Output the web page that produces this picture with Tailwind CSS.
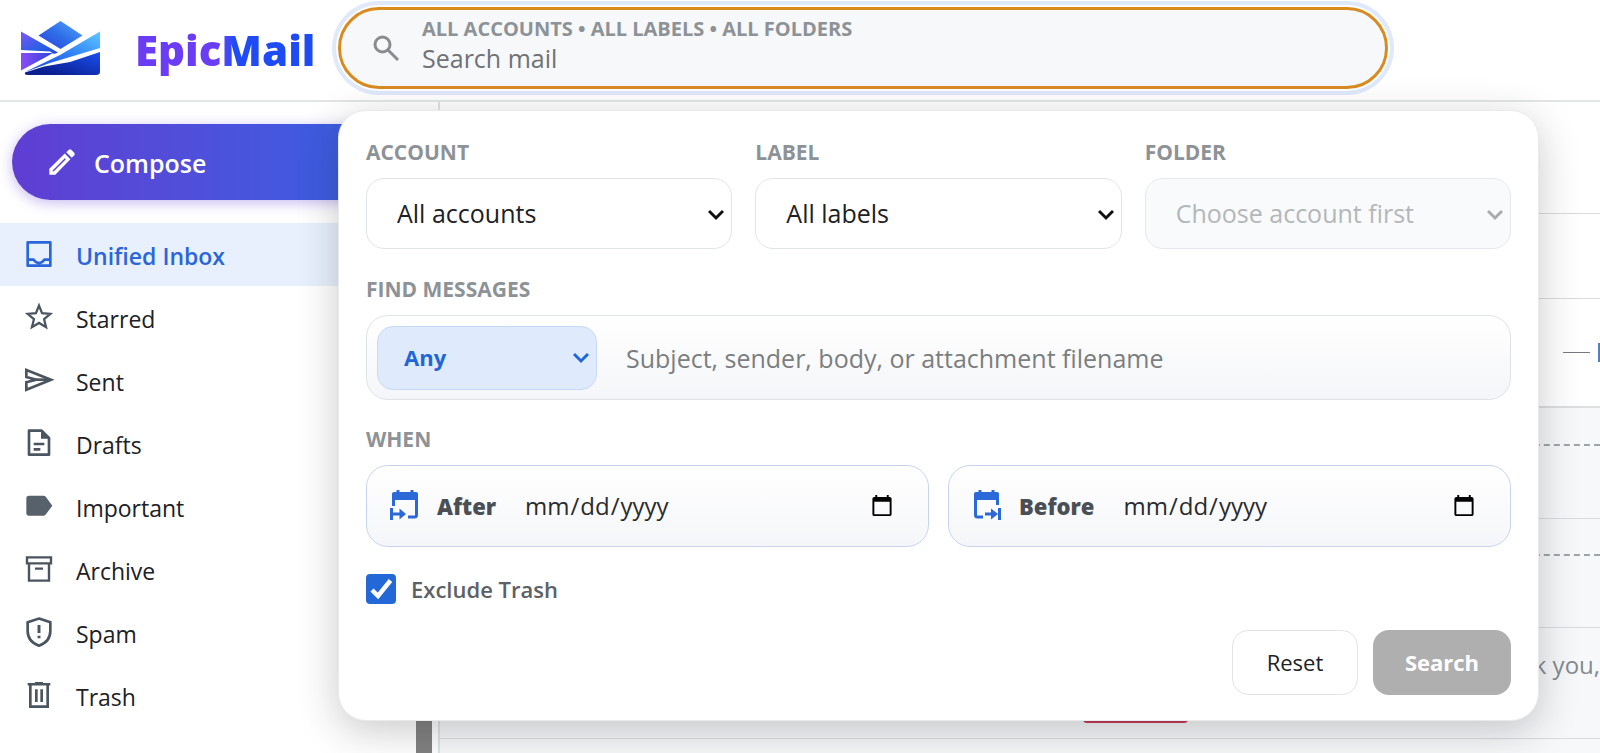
<!DOCTYPE html>
<html lang="en">
<head>
<meta charset="utf-8">
<meta name="viewport" content="width=device-width, initial-scale=1">
<title>EpicMail</title>
<script src="https://cdn.jsdelivr.net/npm/@tailwindcss/browser@4"></script>
</head>
<body class="relative flex h-screen flex-col overflow-hidden bg-white font-['Open_Sans','Noto_Sans',sans-serif] text-[23px] text-[#202124]">

<header class="relative flex h-[102px] shrink-0 items-start border-b-2 border-[#e3e6e7] bg-white">
  <a href="#" class="flex h-full w-[338px] shrink-0 items-center gap-[35px] pl-[20px]">
    <svg class="h-[58px] w-[80px] shrink-0" viewBox="0 0 80 58" aria-hidden="true">
      <defs>
        <linearGradient id="gt" x1="0" y1="1" x2="1" y2="0"><stop offset="0" stop-color="#2a3fdc"/><stop offset="0.5" stop-color="#2f6fe8"/><stop offset="1" stop-color="#55a8ff"/></linearGradient>
        <linearGradient id="gl" x1="0" y1="0" x2="1" y2="1"><stop offset="0" stop-color="#7d55f5"/><stop offset="0.6" stop-color="#2b5fe6"/><stop offset="1" stop-color="#1f49dc"/></linearGradient>
        <linearGradient id="gm" x1="0" y1="0" x2="1" y2="0"><stop offset="0" stop-color="#8a4df5"/><stop offset="1" stop-color="#2b45dc"/></linearGradient>
        <linearGradient id="gr" x1="0" y1="1" x2="1" y2="0"><stop offset="0" stop-color="#1746d8"/><stop offset="0.5" stop-color="#2e7cf6"/><stop offset="1" stop-color="#5cc8ff"/></linearGradient>
        <linearGradient id="gb" x1="0" y1="1" x2="1" y2="0"><stop offset="0.200" stop-color="#0b1f90"/><stop offset="1" stop-color="#1b50f0"/></linearGradient>
      </defs>
      <path d="M40.500 0L62.500 14.500L40.500 28L18.500 14.500Z" fill="url(#gt)"/>
      <path d="M1 10.500L38 31.500L34 33L30 30.500L1 29Z" fill="url(#gl)"/>
      <path d="M1 32H33L25 36.500L1 49.500Z" fill="url(#gm)"/>
      <path d="M80 10.500V27L30 42L5 51L40 34Z" fill="url(#gr)"/>
      <path d="M80 31V51Q80 54 76 54H8Q4 54 5 51.500L24 45.500L50 41Z" fill="url(#gb)"/>
    </svg>
    <span class="bg-linear-to-r from-[#6a3df5] from-45% to-[#1f4bf5] to-55% bg-clip-text text-[42px] leading-[58px] font-extrabold text-transparent">EpicMail</span>
  </a>
  <div class="mt-[7px] flex h-[82px] w-[1050px] items-center gap-[22px] rounded-full bg-[#f6f8fa] pl-[34px] shadow-[0_0_0_2px_#fff,0_0_0_6px_#dfe9fb] outline-3 -outline-offset-3 outline-[#d98b1f]">
    <svg class="size-[28px] shrink-0" viewBox="0 0 28 28" fill="none" stroke="#8a8d90" stroke-width="3" aria-hidden="true"><circle cx="10.500" cy="10.500" r="7.500"/><path d="M16 16L26 26"/></svg>
    <label class="flex flex-1 flex-col pb-[6px]">
      <span class="text-[20px] leading-[26px] font-bold text-[#8d9297]">ALL ACCOUNTS • ALL LABELS • ALL FOLDERS</span>
      <input type="text" placeholder="Search mail" class="h-[32px] w-full bg-transparent text-[25px] leading-[32px] outline-none placeholder:text-[#6f7275]">
    </label>
  </div>
</header>

<div class="flex min-h-0 flex-1">
  <nav class="flex w-[440px] shrink-0 flex-col overflow-hidden border-r-2 border-[#e0e3e4] pt-[22px]">
    <button class="mb-[23px] ml-[12px] flex h-[76px] w-[392px] shrink-0 items-center gap-[16px] rounded-full bg-linear-to-r from-[#5f3dd3] to-[#2f62e3] pl-[34px] text-[25px] font-semibold text-white shadow-[0_3px_14px_rgba(95,61,211,0.35)]">
      <svg class="size-[32px]" viewBox="0 0 24 24" fill="#fff" aria-hidden="true"><path fill-rule="evenodd" d="M2.500 17L14.100 5.700L18.300 9.900L7 21.500H2.500ZM5 18.300V19H5.900L14.900 9.900L14.100 9.100Z"/><path d="M15.200 4.700L17.100 2.800Q18 2.100 18.900 2.800L21.200 5.100Q21.900 6 21.200 6.900L19.300 8.800Z"/></svg>
      <span class="pt-[3px]">Compose</span>
    </button>
    <a href="#" class="flex h-[63px] shrink-0 items-center gap-[21px] bg-[#e8f0fd] pl-[23px] font-semibold text-[#2a66d9]">
      <svg class="size-[32px]" viewBox="0 0 24 24" fill="none" stroke="currentColor" stroke-width="2" stroke-linejoin="round" aria-hidden="true"><path d="M3.500 2.500H20.500V20H3.500ZM3.500 15.500H8Q9.500 18 12 18T16 15.500H20.500"/></svg><span class="pt-[3px]">Unified Inbox</span></a>
    <a href="#" class="flex h-[63px] shrink-0 items-center gap-[21px] pl-[23px]">
      <svg class="size-[32px]" viewBox="0 0 24 24" fill="none" stroke="#4a5560" stroke-width="1.700" aria-hidden="true"><path d="M12 2.700L14.300 8.400L20.500 8.900L15.800 12.900L17.300 18.900L12 15.700L6.700 18.900L8.200 12.900L3.500 8.900L9.700 8.400Z"/></svg><span class="pt-[3px]">Starred</span></a>
    <a href="#" class="flex h-[63px] shrink-0 items-center gap-[21px] pl-[23px]">
      <svg class="size-[32px]" viewBox="0 0 24 24" fill="none" stroke="#4a5560" stroke-width="2" aria-hidden="true"><path d="M2.500 3.800L21 11L2.500 18.500V13L10 11L2.500 9Z"/><path d="M10 11H21"/></svg><span class="pt-[3px]">Sent</span></a>
    <a href="#" class="flex h-[63px] shrink-0 items-center gap-[21px] pl-[23px]">
      <svg class="size-[32px]" viewBox="0 0 24 24" fill="none" stroke="#4a5560" stroke-width="2" aria-hidden="true"><path d="M4.500 2H14L19.500 7.500V20H4.500Z" stroke-linejoin="round"/><path d="M13.500 2V8H19.500Z" fill="#4a5560" stroke="none"/><path d="M8 12H16M8 16H13"/></svg><span class="pt-[3px]">Drafts</span></a>
    <a href="#" class="flex h-[63px] shrink-0 items-center gap-[21px] pl-[23px]">
      <svg class="size-[32px]" viewBox="0 0 24 24" fill="#57616b" aria-hidden="true"><path d="M4.500 3.500H15.500Q16.500 3.500 17.200 4.500L22 11L17.200 17.500Q16.500 18.500 15.500 18.500H4.500Q2.500 18.500 2.500 16.500V5.500Q2.500 3.500 4.500 3.500Z"/></svg><span class="pt-[3px]">Important</span></a>
    <a href="#" class="flex h-[63px] shrink-0 items-center gap-[21px] pl-[23px]">
      <svg class="size-[32px]" viewBox="0 0 24 24" fill="none" stroke="#4a5560" stroke-width="1.800" aria-hidden="true"><path d="M3 2.500H21V7H3ZM4.500 7V20H19.500V7M9 11H15"/></svg><span class="pt-[3px]">Archive</span></a>
    <a href="#" class="flex h-[63px] shrink-0 items-center gap-[21px] pl-[23px]">
      <svg class="size-[32px]" viewBox="0 0 24 24" fill="none" stroke="#4a5560" stroke-width="2" aria-hidden="true"><path d="M12 1.200L20.500 4V10.500Q20.500 18.500 12 21.500Q3.500 18.500 3.500 10.500V4Z"/><path d="M12 6V12M12 14V16" stroke-width="2.200"/></svg><span class="pt-[3px]">Spam</span></a>
    <a href="#" class="flex h-[63px] shrink-0 items-center gap-[21px] pl-[23px]">
      <svg class="size-[32px]" viewBox="0 0 24 24" fill="none" stroke="#4a5560" stroke-width="2" aria-hidden="true"><path d="M3.500 3.200H20.500M9 2.500H15M5.500 3.500V20H18.500V3.500M10 7V16.500M14 7V16.500"/></svg><span class="pt-[3px]">Trash</span></a>
  </nav>
  <main class="flex min-w-0 flex-1 flex-col overflow-hidden bg-[#f6f8fa] text-[#858a90]">
    <div class="h-[112px] shrink-0 border-b border-[#d9dcde] bg-white"></div>
    <div class="h-[85px] shrink-0 border-b border-[#d9dcde] bg-white"></div>
    <div class="flex h-[109px] shrink-0 items-center justify-end gap-[8px] border-b-2 border-[#dcdee0] bg-white"><span class="h-px w-[27px] bg-[#777b80]"></span><span class="h-[19px] w-[2px] bg-[#4e7fc4]"></span></div>
    <div class="h-[111px] shrink-0 border-b border-[#d9dcde] pt-[36px]"><div class="border-t-2 border-dashed border-[#a0a5a9]"></div></div>
    <div class="h-[109px] shrink-0 border-b border-[#d9dcde] pt-[35px]"><div class="border-t-2 border-dashed border-[#a0a5a9]"></div></div>
    <div class="relative flex h-[111px] shrink-0 items-start justify-end border-b border-[#d9dcde] pt-[20px] text-[24px]"><span class="leading-[34px]">Thank you,</span><span class="absolute bottom-[15px] left-[643px] h-[30px] w-[105px] rounded-sm bg-[#c43a55]"></span></div>
    <div class="h-[80px] shrink-0"></div>
  </main>
</div>

<!-- sidebar scrollbar thumb -->
<div class="absolute top-[670px] left-[416px] h-[83px] w-[16px] bg-[#818181]"></div>

<form class="absolute top-[110px] right-[61px] left-[338px] flex flex-col rounded-[28px] border border-[#e8eaec] bg-white px-[27px] pt-[27px] pb-[25px] shadow-[0_10px_40px_rgba(32,33,36,0.24)]">
  <div class="grid grid-cols-3 gap-[23px]">
    <label class="flex flex-col gap-[12px]">
      <span class="text-[21px] leading-[28px] font-bold text-[#8d9297]">ACCOUNT</span>
      <span class="relative block"><select class="h-[71px] w-full appearance-none rounded-[18px] border border-[#e2e5e7] bg-white pl-[30px] text-[25px]"><option>All accounts</option></select>
      <svg class="pointer-events-none absolute top-[31px] right-[8px] h-[12px] w-[16px]" viewBox="0 0 16 12" fill="none" stroke="#111" stroke-width="3" aria-hidden="true"><path d="M1 2L8 9L15 2"/></svg></span>
    </label>
    <label class="flex flex-col gap-[12px]">
      <span class="text-[21px] leading-[28px] font-bold text-[#8d9297]">LABEL</span>
      <span class="relative block"><select class="h-[71px] w-full appearance-none rounded-[18px] border border-[#e2e5e7] bg-white pl-[30px] text-[25px]"><option>All labels</option></select>
      <svg class="pointer-events-none absolute top-[31px] right-[8px] h-[12px] w-[16px]" viewBox="0 0 16 12" fill="none" stroke="#111" stroke-width="3" aria-hidden="true"><path d="M1 2L8 9L15 2"/></svg></span>
    </label>
    <label class="flex flex-col gap-[12px]">
      <span class="text-[21px] leading-[28px] font-bold text-[#8d9297]">FOLDER</span>
      <span class="relative block"><select disabled class="h-[71px] w-full appearance-none rounded-[18px] border border-[#e6e9eb] bg-[#f8fafb] pl-[30px] text-[25px] text-[#b4b7b9] opacity-100"><option>Choose account first</option></select>
      <svg class="pointer-events-none absolute top-[31px] right-[8px] h-[12px] w-[16px]" viewBox="0 0 16 12" fill="none" stroke="#a9acae" stroke-width="3" aria-hidden="true"><path d="M1 2L8 9L15 2"/></svg></span>
    </label>
  </div>
  <h2 class="mt-[26px] text-[21px] leading-[28px] font-bold text-[#8d9297]">FIND MESSAGES</h2>
  <div class="mt-[12px] flex h-[85px] items-center gap-[29px] rounded-[22px] border border-[#e0e3e5] bg-linear-to-b from-white to-[#f5f6f9] pl-[10px]">
    <span class="relative block w-[220px] shrink-0"><select aria-label="Match field" class="h-[64px] w-full appearance-none rounded-[16px] border border-[#c8d9f6] bg-[#dfebfc] pl-[26px] text-[22px] font-bold text-[#2166d8]"><option>Any</option></select>
    <svg class="pointer-events-none absolute top-[26px] right-[8px] h-[12px] w-[16px]" viewBox="0 0 16 12" fill="none" stroke="#2166d8" stroke-width="3" aria-hidden="true"><path d="M1 2L8 9L15 2"/></svg></span>
    <input type="text" aria-label="Find messages" placeholder="Subject, sender, body, or attachment filename" class="h-[60px] min-w-0 flex-1 bg-transparent text-[25px] outline-none placeholder:text-[#7b7e80]">
  </div>
  <h2 class="mt-[25px] text-[21px] leading-[28px] font-bold text-[#8d9297]">WHEN</h2>
  <div class="mt-[12px] grid grid-cols-2 gap-[19px]">
    <label class="flex h-[82px] items-center rounded-[22px] border border-[#c8d4ef] bg-linear-to-b from-white to-[#f5f6f9] pr-[32px] pl-[23px]">
      <svg class="h-[32px] w-[30px] shrink-0" viewBox="0 0 30 32" fill="none" stroke="#2b69d8" stroke-width="3" aria-hidden="true"><path d="M3.500 16V5H26.500V25Q26.500 27 24.500 27H18"/><path d="M4 2H26Q28 2 28 4V10H2V4Q2 2 4 2Z" fill="#2b69d8" stroke="none"/><path d="M8 0V4M22 0V4M1.500 18V30M2 24H11"/><path d="M9.500 18.500L16 24L9.500 29.500Z" fill="#2b69d8" stroke="none"/></svg>
      <span class="mr-[28px] ml-[17px] text-[22px] font-extrabold text-[#4a4f55]">After</span>
      <input type="date" class="min-w-0 flex-1 bg-transparent text-[24px] text-[#2b2b2b] outline-none">
    </label>
    <label class="flex h-[82px] items-center rounded-[22px] border border-[#c8d4ef] bg-linear-to-b from-white to-[#f5f6f9] pr-[32px] pl-[23px]">
      <svg class="h-[32px] w-[30px] shrink-0" viewBox="0 0 30 32" fill="none" stroke="#2b69d8" stroke-width="3" aria-hidden="true"><path d="M25.500 15V5H3.500V25Q3.500 27 5.500 27H11"/><path d="M4 2H25Q27 2 27 4V10H2V4Q2 2 4 2Z" fill="#2b69d8" stroke="none"/><path d="M8 0V4M21 0V4M27.500 18V30M13 24H21"/><path d="M19 18.500L26 24L19 29.500Z" fill="#2b69d8" stroke="none"/></svg>
      <span class="mr-[28px] ml-[17px] text-[22px] font-extrabold text-[#4a4f55]">Before</span>
      <input type="date" class="min-w-0 flex-1 bg-transparent text-[24px] text-[#2b2b2b] outline-none">
    </label>
  </div>
  <label class="mt-[26px] flex h-[32px] items-center gap-[15px] text-[22px] font-semibold text-[#5c6167]">
    <span class="relative block size-[30px]"><input type="checkbox" checked class="block size-[30px] appearance-none rounded-[4px] bg-[#2468d8]"><svg class="pointer-events-none absolute inset-0 size-[30px]" viewBox="0 0 30 30" fill="none" stroke="#fff" stroke-width="4.500" aria-hidden="true"><path d="M6 16L12 22L24.500 6.500"/></svg></span>
    <span>Exclude Trash</span>
  </label>
  <div class="mt-[25px] flex justify-end gap-[15px]">
    <button type="reset" class="h-[65px] w-[126px] rounded-[16px] border border-[#e2e4e6] bg-white text-[22px] font-medium">Reset</button>
    <button type="button" class="h-[65px] w-[138px] rounded-[16px] bg-[#afafaf] text-[22px] font-bold text-white">Search</button>
  </div>
</form>
</body>
</html>
